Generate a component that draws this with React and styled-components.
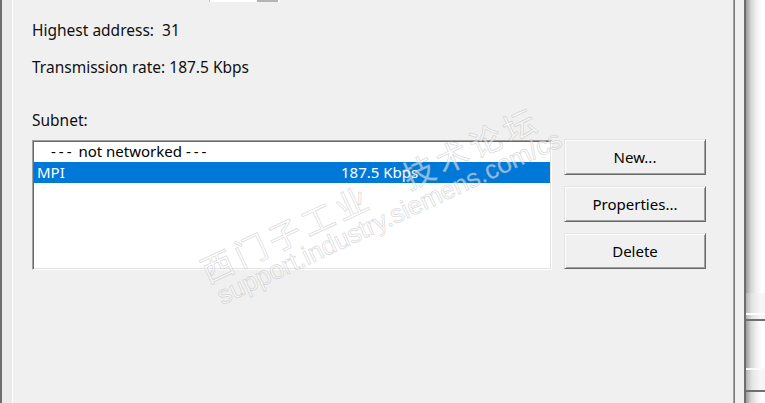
import React from "react";
import styled, { createGlobalStyle } from "styled-components";

const GlobalStyle = createGlobalStyle`
  html, body {
    margin: 0;
    padding: 0;
    background: #f0f0f0;
  }
  body {
    font-family: "Noto Sans", "Liberation Sans", sans-serif;
  }
`;

const Page = styled.div`
  position: relative;
  display: flex;
  width: 765px;
  height: 403px;
  overflow: hidden;
  background: #f0f0f0;
`;

const LeftFrame = styled.div`
  flex: 0 0 10px;
  border-left: 2px solid #6e6e6e;
  border-right: 1px solid #ffffff;
  background: #ebebeb;
`;

const Panel = styled.div`
  flex: 0 0 701px;
  padding-left: 19px;
  background: #f0f0f0;
  border-right: 1px solid #a3a3a3;
  box-shadow: 1px 0 0 #7a7a7a;
  margin-right: 1px;
`;

const ComboStub = styled.div`
  display: flex;
  width: 68px;
  height: 2px;
  margin-left: 177px;
  border-left: 1px solid #c4c4c4;
  border-right: 2px solid #ffffff;
`;

const ComboField = styled.div`
  flex: 1;
  background: #ffffff;
`;

const ComboButton = styled.div`
  flex: 0 0 21px;
  background: #b4b4b4;
`;

const InfoLine = styled.div`
  margin-top: ${(p) => p.$gap}px;
  font-size: 15.5px;
  line-height: 20px;
  color: #101010;
  white-space: pre;
`;

const SubnetRow = styled.div`
  display: flex;
  align-items: flex-start;
  gap: 12px;
  margin-top: 10px;
`;

const ListBox = styled.div`
  width: 516px;
  height: 128px;
  background: #ffffff;
  border: 1px solid;
  border-color: #a0a0a0 #ffffff #ffffff #a0a0a0;
  box-shadow: inset 1px 1px 0 #696969, inset -1px -1px 0 #e3e3e3;
  padding: 0 1px;
  font-size: 15px;
`;

const ListItem = styled.div`
  display: grid;
  grid-template-columns: 304px 1fr;
  height: 21px;
  line-height: 21px;
  padding-left: ${(p) => p.$indent}px;
  background: ${(p) => (p.$selected ? "#0078d7" : "transparent")};
  color: ${(p) => (p.$selected ? "#ffffff" : "#000000")};
  white-space: pre;
`;

const Dashes = styled.span`
  letter-spacing: 3px;
`;

const ButtonColumn = styled.div`
  display: flex;
  flex-direction: column;
  gap: 11px;
  margin-top: -1px;
`;

const Button = styled.button`
  width: 142px;
  height: 36px;
  padding: 0;
  font-family: "Noto Sans", "Liberation Sans", sans-serif;
  font-size: 15px;
  color: #000000;
  background: #f0f0f0;
  border: 1px solid;
  border-color: #e3e3e3 #696969 #696969 #e3e3e3;
  box-shadow: inset 1px 1px 0 #ffffff, inset -1px -1px 0 #a0a0a0;
`;

const Gap = styled.div`
  flex: 0 0 9px;
  background: #f0f0f0;
  border-right: 2px solid #6d6d6d;
`;

const BackWindow = styled.div`
  flex: 1;
  display: flex;
  flex-direction: column;
`;

const Strip = styled.div`
  flex: 0 0 ${(p) => p.$h}px;
  background: ${(p) =>
    p.$line ||
    `linear-gradient(to right, #9a9a9a 0px, #d6d6d6 5px, #f2f2f2 11px, #ffffff 16px)`};
`;

const Watermark = styled.div`
  position: absolute;
  left: 194px;
  top: 254px;
  transform: rotate(-25deg);
  transform-origin: 0 0;
  pointer-events: none;
  white-space: nowrap;
  color: rgba(255, 255, 255, 0.55);
  -webkit-text-stroke: 0.8px rgba(150, 150, 150, 0.35);
`;

const MarkTitle = styled.div`
  font-family: "Noto Sans CJK SC", sans-serif;
  font-size: 32px;
  line-height: 38px;
  letter-spacing: 5px;
`;

const MarkUrl = styled.div`
  margin-left: 4px;
  margin-top: -4px;
  font-family: "Liberation Sans", sans-serif;
  font-size: 26px;
  line-height: 30px;
`;

export default function App() {
  return (
    <>
      <GlobalStyle />
      <Page>
        <LeftFrame />
        <Panel>
          <ComboStub>
            <ComboField />
            <ComboButton />
          </ComboStub>
          <InfoLine $gap={18}>Highest address:  31</InfoLine>
          <InfoLine $gap={17}>Transmission rate: 187.5 Kbps</InfoLine>
          <InfoLine $gap={33}>Subnet:</InfoLine>
          <SubnetRow>
            <ListBox>
              <ListItem $indent={17}>
                <span>
                  <Dashes>---</Dashes> not networked <Dashes>---</Dashes>
                </span>
              </ListItem>
              <ListItem $indent={3} $selected>
                <span>MPI</span>
                <span>187.5 Kbps</span>
              </ListItem>
            </ListBox>
            <ButtonColumn>
              <Button>New...</Button>
              <Button>Properties...</Button>
              <Button>Delete</Button>
            </ButtonColumn>
          </SubnetRow>
        </Panel>
        <Gap />
        <BackWindow>
          <Strip $h={293} />
          <Strip $h={20} $line="linear-gradient(to right, #b4b4b4 0px, #e4e4e4 6px, #f6f6f6 14px)" />
          <Strip $h={2} $line="#ffffff" />
          <Strip $h={4} $line="linear-gradient(to right, #b4b4b4 0px, #e4e4e4 6px, #f6f6f6 14px)" />
          <Strip $h={2} $line="#6f6f6f" />
          <Strip $h={47} />
          <Strip $h={2} $line="#fafafa" />
          <Strip $h={20} $line="linear-gradient(to right, #b4b4b4 0px, #e4e4e4 6px, #f6f6f6 14px)" />
          <Strip $h={2} $line="#6f6f6f" />
          <Strip $h={11} />
        </BackWindow>
        <Watermark>
          <MarkTitle>西门子工业　技术论坛</MarkTitle>
          <MarkUrl>support.industry.siemens.com/cs</MarkUrl>
        </Watermark>
      </Page>
    </>
  );
}
